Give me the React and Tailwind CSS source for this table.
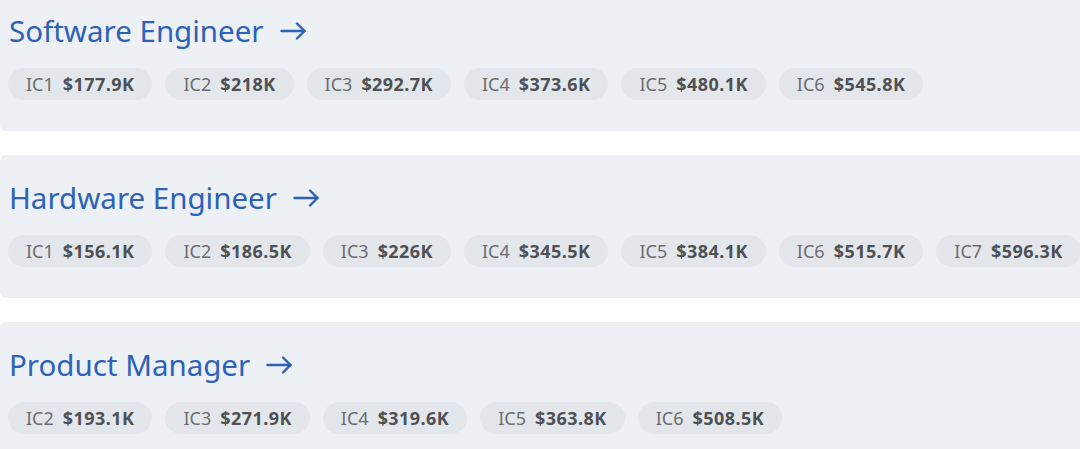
import React from "react";

const data = [
  { title: "Software Engineer", levels: [["IC1", "$177.9K"], ["IC2", "$218K"], ["IC3", "$292.7K"], ["IC4", "$373.6K"], ["IC5", "$480.1K"], ["IC6", "$545.8K"]] },
  { title: "Hardware Engineer", levels: [["IC1", "$156.1K"], ["IC2", "$186.5K"], ["IC3", "$226K"], ["IC4", "$345.5K"], ["IC5", "$384.1K"], ["IC6", "$515.7K"], ["IC7", "$596.3K"]] },
  { title: "Product Manager", levels: [["IC2", "$193.1K"], ["IC3", "$271.9K"], ["IC4", "$319.6K"], ["IC5", "$363.8K"], ["IC6", "$508.5K"]] },
];

function Arrow() {
  return (
    <svg width="26" height="18" viewBox="0 0 26 18" fill="none" stroke="#2c62b8" strokeWidth="2.4" strokeLinecap="round" strokeLinejoin="round">
      <path d="M1.5 9H24.5" />
      <path d="M17 1.5L24.5 9L17 16.5" />
    </svg>
  );
}

export default function App() {
  return (
    <div className="w-[1080px] h-[449px] overflow-hidden bg-white" style={{ fontFamily: "'Noto Sans', sans-serif" }}>
      <div className="mt-[-12px] flex flex-col gap-[24px] w-[1120px]">
        {data.map((card) => (
          <div key={card.title} className="bg-[#edf0f5] rounded-[6px] px-2 pt-[23px] h-[143px]">
            <div className="flex items-center gap-[16px] pl-[1px]">
              <span className="text-[29.5px] leading-[40px] text-[#2c62b8]">{card.title}</span>
              <Arrow />
            </div>
            <div className="flex gap-[13px] mt-[17px]">
              {card.levels.map(([lv, val]) => (
                <div key={lv} className="h-[32px] rounded-full bg-[#e3e6ea] px-[18px] flex items-center gap-[9px] text-[18px] whitespace-nowrap">
                  <span className="text-[#6b6e72]">{lv}</span>
                  <span className="font-bold text-[#4e5155] tracking-[0.45px]">{val}</span>
                </div>
              ))}
            </div>
          </div>
        ))}
      </div>
    </div>
  );
}
